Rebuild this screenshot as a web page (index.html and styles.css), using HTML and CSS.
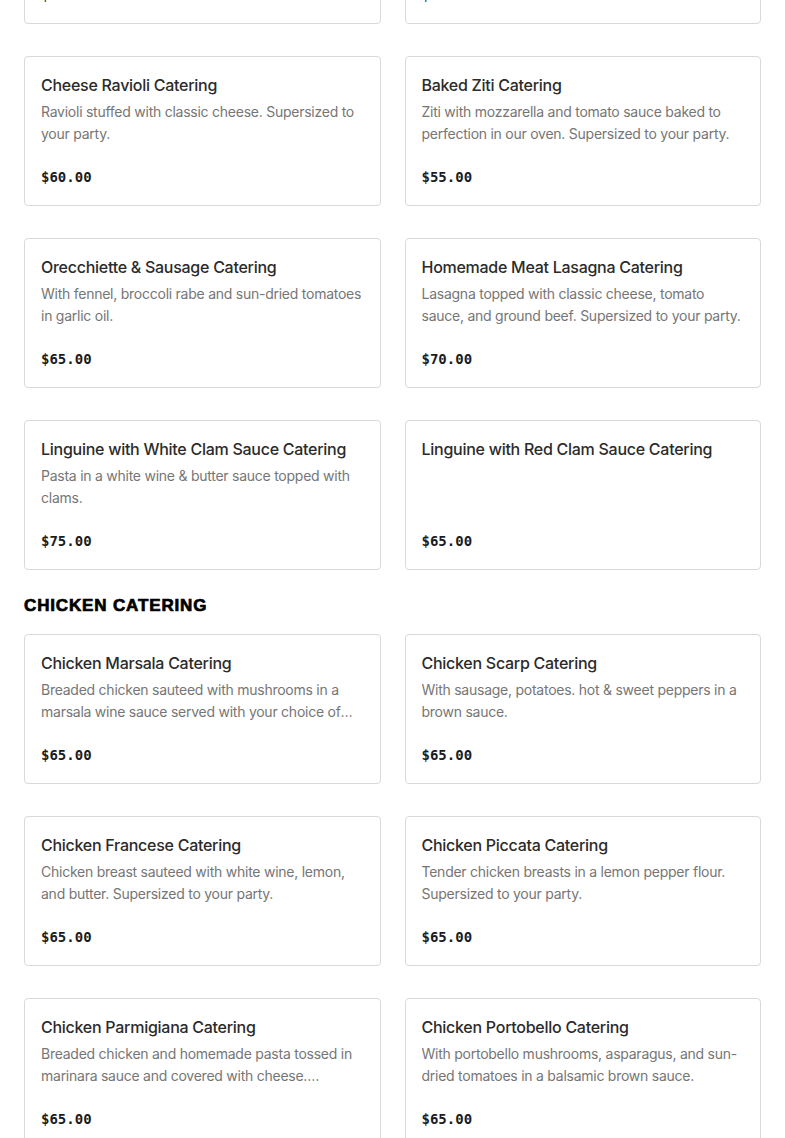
FILE: index.html
```html
<!DOCTYPE html>
<html lang="en">
<head>
<meta charset="utf-8">
<title>Catering Menu</title>
<link rel="stylesheet" href="styles.css">
</head>
<body>
<main class="menu">
  <section class="section section-prev">
    <div class="grid">
      <div class="card"><h3 class="title">Stuffed Shells Catering</h3><p class="desc">Pasta shells stuffed with ricotta cheese. Supersized to your party.</p><div class="price">$60.00</div></div>
      <div class="card"><h3 class="title">Penne alla Vodka Catering</h3><p class="desc">Penne in a pink vodka cream sauce. Supersized to your party.</p><div class="price">$55.00</div></div>
      <div class="card"><h3 class="title">Cheese Ravioli Catering</h3><p class="desc">Ravioli stuffed with classic cheese. Supersized to your party.</p><div class="price">$60.00</div></div>
      <div class="card"><h3 class="title">Baked Ziti Catering</h3><p class="desc">Ziti with mozzarella and tomato sauce baked to perfection in our oven. Supersized to your party.</p><div class="price">$55.00</div></div>
      <div class="card"><h3 class="title">Orecchiette &amp; Sausage Catering</h3><p class="desc">With fennel, broccoli rabe and sun-dried tomatoes in garlic oil.</p><div class="price">$65.00</div></div>
      <div class="card"><h3 class="title">Homemade Meat Lasagna Catering</h3><p class="desc">Lasagna topped with classic cheese, tomato sauce, and ground beef. Supersized to your party.</p><div class="price">$70.00</div></div>
      <div class="card"><h3 class="title">Linguine with White Clam Sauce Catering</h3><p class="desc">Pasta in a white wine &amp; butter sauce topped with clams.</p><div class="price">$75.00</div></div>
      <div class="card"><h3 class="title">Linguine with Red Clam Sauce Catering</h3><p class="desc"></p><div class="price">$65.00</div></div>
    </div>
  </section>
  <section class="section">
    <h2 class="section-title">CHICKEN CATERING</h2>
    <div class="grid">
      <div class="card"><h3 class="title">Chicken Marsala Catering</h3><p class="desc">Breaded chicken sauteed with mushrooms in a marsala wine sauce served with your choice of pasta. Supersized to your party.</p><div class="price">$65.00</div></div>
      <div class="card"><h3 class="title">Chicken Scarp Catering</h3><p class="desc">With sausage, potatoes. hot &amp; sweet peppers in a brown sauce.</p><div class="price">$65.00</div></div>
      <div class="card"><h3 class="title">Chicken Francese Catering</h3><p class="desc">Chicken breast sauteed with white wine, lemon, and butter. Supersized to your party.</p><div class="price">$65.00</div></div>
      <div class="card"><h3 class="title">Chicken Piccata Catering</h3><p class="desc">Tender chicken breasts in a lemon pepper flour. Supersized to your party.</p><div class="price">$65.00</div></div>
      <div class="card"><h3 class="title">Chicken Parmigiana Catering</h3><p class="desc">Breaded chicken and homemade pasta tossed in marinara sauce and covered with cheese. Supersized to your party.</p><div class="price">$65.00</div></div>
      <div class="card"><h3 class="title">Chicken Portobello Catering</h3><p class="desc">With portobello mushrooms, asparagus, and sun-dried tomatoes in a balsamic brown sauce.</p><div class="price">$65.00</div></div>
    </div>
  </section>
</main>
</body>
</html>
```
FILE: styles.css
```css
* { box-sizing: border-box; }
html, body { margin: 0; padding: 0; background: #fff; }
body { font-family: Inter, "Noto Sans", sans-serif; color: #2d2d2d; overflow: hidden; }
.menu { padding: 0 24px; margin-top: -126px; }
.section { display: flex; flex-direction: column; }
.section-prev { margin-bottom: 25px; }
.grid { display: grid; grid-template-columns: 1fr 1fr; column-gap: 24px; row-gap: 32px; }
.section-title {
  margin: 0 0 17px 0;
  font-family: "Liberation Sans", Arial, sans-serif;
  font-weight: 900;
  font-size: 17px;
  line-height: 22px;
  color: #000;
  letter-spacing: 0.85px;
  -webkit-text-stroke: 0.7px #000;
}
.card {
  height: 150px;
  border: 1px solid #d9d9d9;
  border-radius: 4px;
  padding: 16px;
  display: flex;
  flex-direction: column;
}
.title {
  margin: 0;
  font-size: 16px;
  font-weight: 500;
  line-height: 24px;
  color: #2b2b2b;
  letter-spacing: -0.27px;
}
.desc {
  margin: 4px 0 0 0;
  font-size: 14px;
  line-height: 22px;
  color: #767676;
  letter-spacing: -0.25px;
  display: -webkit-box;
  -webkit-line-clamp: 2;
  -webkit-box-orient: vertical;
  overflow: hidden;
}
.price {
  margin-top: auto;
  font-family: "DejaVu Sans Mono", "Liberation Mono", monospace;
  font-weight: bold;
  font-size: 14px;
  line-height: 24px;
  color: #1c1c1c;
}
```
